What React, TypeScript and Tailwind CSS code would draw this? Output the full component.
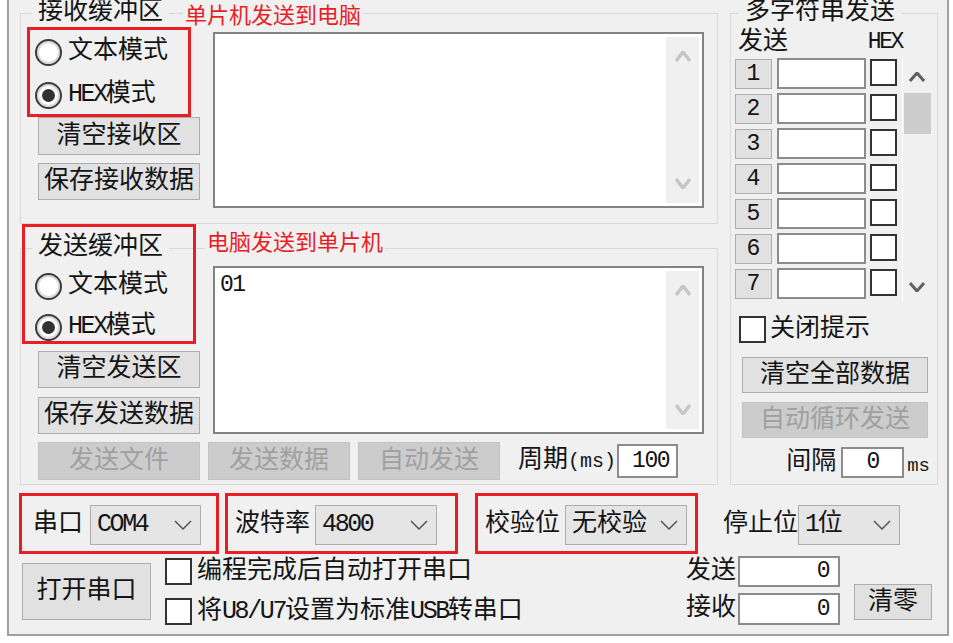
import React from 'react';

const UI = "font-['Liberation_Mono','Noto_Sans_CJK_SC',sans-serif]";

function Chevron({ up = false, className = '', w = 18, h = 10, sw = 1.5 }: { up?: boolean; className?: string; w?: number; h?: number; sw?: number }) {
  const pts = up ? `1,${h - 1} ${w / 2},1 ${w - 1},${h - 1}` : `1,1 ${w / 2},${h - 1} ${w - 1},1`;
  return (
    <svg width={w} height={h} viewBox={`0 0 ${w} ${h}`} className={className}>
      <polyline points={pts} fill="none" stroke="currentColor" strokeWidth={sw} />
    </svg>
  );
}

function Btn({ children, className = '', disabled = false }: { children: React.ReactNode; className?: string; disabled?: boolean }) {
  return (
    <button
      className={`flex items-center justify-center border leading-none ${
        disabled ? 'bg-[#cccccc] border-[#c2c2c2] text-[#a0a0a0]' : 'bg-[#e1e1e1] border-[#adadad] text-[#141414]'
      } ${className}`}
    >
      {children}
    </button>
  );
}

// Latin text in the old bitmap font: narrow but tall glyphs
function Lat({ children }: { children: React.ReactNode }) {
  return <span className="text-[25px] tracking-[-2.4px]">{children}</span>;
}

function Radio({ checked, children }: { checked?: boolean; children: React.ReactNode }) {
  return (
    <div className="flex items-center h-[36px]">
      <span className="w-[27px] h-[27px] rounded-full border-2 border-[#3a3a3a] bg-white flex items-center justify-center shadow-[inset_0_0_0_2px_#dadada]">
        {checked && <span className="w-[13px] h-[13px] rounded-full bg-[#333333]" />}
      </span>
      <span className="ml-[6px] leading-[26px]">{children}</span>
    </div>
  );
}

function Box({ className = '' }: { className?: string }) {
  return <span className={`block w-[27px] h-[27px] border-2 border-[#333333] bg-white shrink-0 ${className}`} />;
}

function Select({ value, className = '' }: { value: React.ReactNode; className?: string }) {
  return (
    <div className={`flex items-center justify-between h-[40px] bg-[#e5e5e5] border border-[#adadad] pl-[6px] pr-[8px] ${className}`}>
      <span className="leading-[26px]">{value}</span>
      <Chevron className="text-[#555555]" />
    </div>
  );
}

function TextBox({ className = '', text }: { className?: string; text?: string }) {
  return (
    <div className={`flex border-2 border-[#828282] bg-white p-[3px] ${className}`}>
      <div className="flex-1 pl-[2px] pt-[3px] text-[23px] tracking-[-1.5px] leading-[22px]">{text}</div>
      <div className="w-[33px] bg-[#f0f0f0] flex flex-col items-center justify-between py-[14px] text-[#c6c6c6]">
        <Chevron up w={16} h={11} sw={3.5} />
        <Chevron w={16} h={11} sw={3.5} />
      </div>
    </div>
  );
}

function Field({ className = '', children }: { className?: string; children?: React.ReactNode }) {
  return (
    <div className={`flex items-center border-2 border-[#8c8c8c] bg-white text-[23px] tracking-[-1.5px] ${className}`}>{children}</div>
  );
}

export default function App() {
  const rows = [1, 2, 3, 4, 5, 6, 7];

  return (
    <div className={`relative w-[953px] h-[643px] bg-white overflow-hidden text-[25px] text-[#141414] ${UI}`}>
      <div className="ml-[7px] w-[942px] h-[636px] border-l-2 border-r-2 border-b-2 border-[#a0a0a0] bg-[#f0f0f0]">
        {/* Top area */}
        <div className="flex pl-[11px] h-[485px]">
          <div className="flex flex-col w-[698px]">
            {/* Receive buffer */}
            <fieldset className="h-[224px] border border-[#d9d9d9]">
              <legend className="ml-[11px] px-[6px] leading-[26px]">接收缓冲区</legend>
              <div className="flex">
                <div className="w-[192px] flex flex-col">
                  <div className="pl-[14px] mt-[8px]">
                    <Radio>文本模式</Radio>
                    <div className="mt-[7px]">
                      <Radio checked>
                        <Lat>HEX</Lat>模式
                      </Radio>
                    </div>
                  </div>
                  <Btn className="ml-[17px] mt-[4px] w-[162px] h-[38px]">清空接收区</Btn>
                  <Btn className="ml-[17px] mt-[8px] w-[162px] h-[37px]">保存接收数据</Btn>
                </div>
                <TextBox className="mt-[6px] w-[491px] h-[176px]" />
              </div>
            </fieldset>

            {/* Send buffer */}
            <fieldset className="mt-[11px] h-[250px] border border-[#d9d9d9]">
              <legend className="ml-[11px] px-[6px] leading-[26px]">发送缓冲区</legend>
              <div className="flex">
                <div className="w-[192px] flex flex-col">
                  <div className="pl-[14px] mt-[7px]">
                    <Radio>文本模式</Radio>
                    <div className="mt-[5px]">
                      <Radio checked>
                        <Lat>HEX</Lat>模式
                      </Radio>
                    </div>
                  </div>
                  <Btn className="ml-[17px] mt-[6px] w-[162px] h-[37px]">清空发送区</Btn>
                  <Btn className="ml-[17px] mt-[9px] w-[162px] h-[37px]">保存发送数据</Btn>
                </div>
                <TextBox className="mt-[5px] w-[491px] h-[168px]" text="01" />
              </div>
              <div className="flex items-center mt-[8px] h-[38px]">
                <Btn disabled className="ml-[17px] w-[162px] h-[38px]">发送文件</Btn>
                <Btn disabled className="ml-[8px] w-[142px] h-[38px]">发送数据</Btn>
                <Btn disabled className="ml-[8px] w-[142px] h-[38px]">自动发送</Btn>
                <span className="ml-[18px] leading-[26px]">
                  周期<span className="text-[20px]">(ms)</span>
                </span>
                <Field className="ml-[1px] w-[61px] h-[34px] justify-end pr-[7px]">100</Field>
              </div>
            </fieldset>
          </div>

          {/* Multi-string send */}
          <fieldset className="ml-[12px] w-[208px] h-[485px] border border-[#d9d9d9]">
            <legend className="ml-[8px] px-[6px] leading-[26px]">多字符串发送</legend>
            <div className="flex items-end h-[32px] pb-[3px]">
              <span className="ml-[7px] leading-[25px]">发送</span>
              <span className="ml-auto mr-[35px] text-[23px] tracking-[-2.4px] leading-[20px] mb-[3px]">HEX</span>
            </div>
            <div className="flex">
              <div className="w-[171px]">
                {rows.map((n) => (
                  <div key={n} className="flex items-start h-[35px]">
                    <Btn className="ml-[4px] mt-[1px] w-[37px] h-[30px] text-[23px]">{n}</Btn>
                    <Field className="ml-[5px] w-[89px] h-[31px]" />
                    <Box className="ml-[4px] mt-[1px]" />
                  </div>
                ))}
              </div>
              <div className="w-[29px] h-[243px] border-l border-white bg-[#f0f0f0] flex flex-col items-center text-[#606060]">
                <Chevron up w={16} h={10} sw={3} className="mt-[14px]" />
                <div className="mt-[11px] w-[27px] h-[41px] bg-[#cdcdcd]" />
                <Chevron w={16} h={10} sw={3} className="mt-auto mb-[9px]" />
              </div>
            </div>
            <div className="flex items-center mt-[13px] ml-[8px]">
              <Box />
              <span className="ml-[4px] leading-[26px]">关闭提示</span>
            </div>
            <Btn className="ml-[11px] mt-[14px] w-[186px] h-[36px]">清空全部数据</Btn>
            <Btn disabled className="ml-[11px] mt-[9px] w-[186px] h-[36px]">自动循环发送</Btn>
            <div className="flex items-center justify-end mt-[9px] pr-[7px]">
              <span className="leading-[26px]">间隔</span>
              <Field className="ml-[5px] w-[63px] h-[31px] justify-center">0</Field>
              <span className="ml-[3px] text-[19px] leading-[20px] mt-[6px]">ms</span>
            </div>
          </fieldset>
        </div>

        {/* Serial settings row */}
        <div className="flex items-center mt-[20px] h-[40px]">
          <span className="ml-[24px] leading-[26px]">串口</span>
          <Select className="ml-[7px] w-[111px]" value={<Lat>COM4</Lat>} />
          <span className="ml-[34px] leading-[26px]">波特率</span>
          <Select className="ml-[5px] w-[122px]" value={<Lat>4800</Lat>} />
          <span className="ml-[48px] leading-[26px]">校验位</span>
          <Select className="ml-[5px] w-[122px]" value="无校验" />
          <span className="ml-[36px] leading-[26px]">停止位</span>
          <Select className="w-[102px] pl-[2px]" value={<><Lat>1</Lat>位</>} />
        </div>

        {/* Bottom row */}
        <div className="flex items-start mt-[10px]">
          <Btn className="ml-[13px] mt-[8px] w-[129px] h-[57px]">打开串口</Btn>
          <div className="ml-[14px] flex flex-col">
            <div className="flex items-center mt-[3px] h-[27px]">
              <Box />
              <span className="ml-[5px] leading-[26px]">编程完成后自动打开串口</span>
            </div>
            <div className="flex items-center mt-[13px] h-[27px]">
              <Box />
              <span className="ml-[5px] leading-[26px]">
                将<Lat>U8/U7</Lat>设置为标准<Lat>USB</Lat>转串口
              </span>
            </div>
          </div>
          <div className="ml-auto flex flex-col">
            <div className="flex items-center mt-[1px] h-[31px]">
              <span className="leading-[26px]">发送</span>
              <Field className="ml-[2px] w-[102px] h-[31px] justify-end pr-[9px]">0</Field>
            </div>
            <div className="flex items-center mt-[6px] h-[32px]">
              <span className="leading-[26px]">接收</span>
              <Field className="ml-[2px] w-[102px] h-[32px] justify-end pr-[9px]">0</Field>
            </div>
          </div>
          <Btn className="ml-[14px] mr-[15px] mt-[29px] w-[78px] h-[36px]">清零</Btn>
        </div>
      </div>

      {/* Annotations */}
      <span className="absolute left-[183px] top-[0px] px-[2px] bg-[#f0f0f0] text-[22px] leading-[27px] text-[#e81e25] font-['Noto_Sans_CJK_SC',sans-serif]">
        单片机发送到电脑
      </span>
      <span className="absolute left-[205px] top-[227px] px-[2px] bg-[#f0f0f0] text-[22px] leading-[27px] text-[#e81e25] font-['Noto_Sans_CJK_SC',sans-serif]">
        电脑发送到单片机
      </span>
      <div className="absolute left-[27px] top-[27px] w-[164px] h-[90px] border-[3px] border-[#e81e25]" />
      <div className="absolute left-[22px] top-[224px] w-[174px] h-[120px] border-[3px] border-[#e81e25]" />
      <div className="absolute left-[19px] top-[493px] w-[200px] h-[61px] border-[3px] border-[#e81e25]" />
      <div className="absolute left-[225px] top-[493px] w-[233px] h-[61px] border-[3px] border-[#e81e25]" />
      <div className="absolute left-[475px] top-[493px] w-[223px] h-[61px] border-[3px] border-[#e81e25]" />
    </div>
  );
}
